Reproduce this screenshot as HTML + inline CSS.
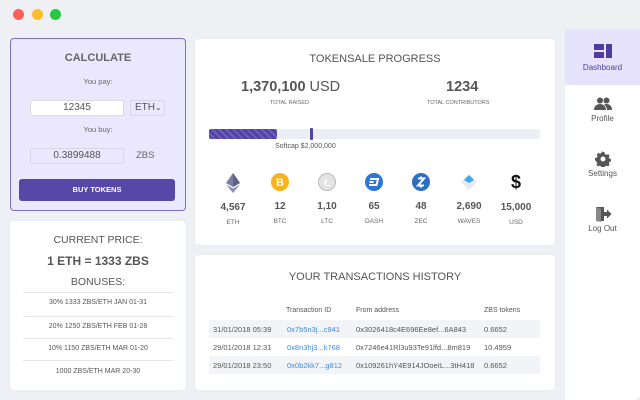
<!DOCTYPE html>
<html><head><style>
*{margin:0;padding:0;box-sizing:border-box}
body{width:640px;height:400px;background:#eef0f5;font-family:"Liberation Sans",sans-serif;position:relative;overflow:hidden;color:#555}
.a{position:absolute}
.card{position:absolute;background:#fff;border-radius:4px;box-shadow:0 0 3px rgba(0,0,0,.05)}
.c{text-align:center}
.dot{position:absolute;top:9px;width:11px;height:11px;border-radius:50%}
.coin{position:absolute;width:40px;text-align:center}
.n{font-size:10px;font-weight:bold;color:#555}
.l{font-size:6.5px;color:#666;margin-top:6px}
.row{position:absolute;left:209px;width:331px;height:18px;font-size:7.5px;color:#555}
.row span{position:absolute;top:5px}
.nav{position:absolute;left:565px;width:75px;text-align:center;font-size:8px;color:#555}
</style></head><body>
<div class="a" style="left:0;top:0;width:640px;height:29px;background:#eff0f3"></div>
<div class="dot" style="left:13px;background:#fe5f57"></div>
<div class="dot" style="left:32px;background:#febc2e"></div>
<div class="dot" style="left:50px;background:#28c840"></div>

<div class="a" style="left:565px;top:29px;width:75px;height:371px;background:#fff;border-bottom-right-radius:6px"></div>
<div class="a" style="left:565px;top:29px;width:75px;height:56px;background:#e7e3fc"></div>
<div class="nav" style="top:43px">
<svg width="20" height="16" viewBox="0 0 20 16"><rect x="1" y="1" width="10" height="6" fill="#4e3d9e"/><rect x="1" y="9" width="10" height="6" fill="#4e3d9e"/><rect x="13" y="1" width="6" height="14" fill="#4e3d9e"/></svg>
<div style="color:#4e3d9e;margin-top:2px">Dashboard</div></div>
<div class="nav" style="top:97px">
<svg width="18" height="14" viewBox="0 0 18 14"><circle cx="6" cy="3.5" r="3" fill="#555"/><circle cx="12.5" cy="3.5" r="3" fill="#555"/><path d="M0 13c0-4 3-6 6-6s6 2 6 6z" fill="#555"/><path d="M10 7.5c1-.5 2-.5 2.5-.5 3 0 5.5 2 5.5 6h-5c0-2-1-4-3-5.5z" fill="#555"/></svg>
<div style="margin-top:1px">Profile</div></div>
<div class="nav" style="top:151px">
<svg width="16" height="16" viewBox="0 0 16 16"><path d="M8 1l1.5 .3.4 1.8 1.5.8 1.7-.8 1.5 1.5-.8 1.7.8 1.5 1.8.4v2.1l-1.8.4-.8 1.5.8 1.7-1.5 1.5-1.7-.8-1.5.8-.4 1.8H6.6l-.4-1.8-1.5-.8-1.7.8-1.5-1.5.8-1.7-.8-1.5L0 9.1V7l1.8-.4.8-1.5-.8-1.7 1.5-1.5 1.7.8 1.5-.8.4-1.8z" fill="#555"/><circle cx="8" cy="8" r="2.5" fill="#fff"/></svg>
<div>Settings</div></div>
<div class="nav" style="top:206px">
<svg width="18" height="16" viewBox="0 0 18 16"><path d="M2 1h8v14H2z" fill="#555"/><path d="M2 1l5 2v13l-5-1z" fill="#888"/><path d="M10 6h3V3.5L17.5 8 13 12.5V10h-3z" fill="#555"/></svg>
<div>Log Out</div></div>

<!-- calculate -->
<div class="a" style="left:10px;top:38px;width:176px;height:173px;background:#ebe7fd;border:1px solid #7e6dcf;border-radius:4px"></div>
<div class="a c" style="left:10px;top:52px;width:176px;font-size:11px;font-weight:bold;color:#666">CALCULATE</div>
<div class="a c" style="left:10px;top:77px;width:176px;font-size:7.5px;color:#666">You pay:</div>
<div class="a c" style="left:30px;top:100px;width:94px;height:16px;background:#fff;border:1px solid #ddd;border-radius:2px;font-size:10px;line-height:14px;color:#555">12345</div>
<div class="a" style="left:130px;top:100px;width:35px;height:16px;border:1px solid #d8d4ea;border-radius:2px;font-size:10px;line-height:14px;padding-left:4px;color:#555">ETH<span style="font-size:8px">⌄</span></div>
<div class="a c" style="left:10px;top:125px;width:176px;font-size:7.5px;color:#666">You buy:</div>
<div class="a c" style="left:30px;top:148px;width:94px;height:16px;border:1px solid #d8d4ea;border-radius:2px;font-size:10px;line-height:14px;color:#555">0.3899488</div>
<div class="a" style="left:136px;top:150px;font-size:9.5px;color:#666">ZBS</div>
<div class="a c" style="left:19px;top:179px;width:156px;height:22px;background:#5748a8;border-radius:3px;color:#fff;font-size:7.5px;font-weight:bold;line-height:22px">BUY TOKENS</div>

<!-- price -->
<div class="card" style="left:10px;top:221px;width:176px;height:169px"></div>
<div class="a c" style="left:10px;top:234px;width:176px;font-size:10.5px;color:#555">CURRENT PRICE:</div>
<div class="a c" style="left:10px;top:254px;width:176px;font-size:12px;font-weight:bold;color:#555">1 ETH = 1333 ZBS</div>
<div class="a c" style="left:10px;top:276px;width:176px;font-size:10.5px;color:#555">BONUSES:</div>
<div class="a" style="left:23px;top:292px;width:150px;border-top:1px solid #e3e6ee"></div>
<div class="a c" style="left:10px;top:299px;width:176px;font-size:7px;color:#555">30% 1333 ZBS/ETH JAN 01-31</div>
<div class="a" style="left:23px;top:316px;width:150px;border-top:1px solid #e3e6ee"></div>
<div class="a c" style="left:10px;top:323px;width:176px;font-size:7px;color:#555">20% 1250 ZBS/ETH FEB 01-28</div>
<div class="a" style="left:23px;top:338px;width:150px;border-top:1px solid #e3e6ee"></div>
<div class="a c" style="left:10px;top:345px;width:176px;font-size:7px;color:#555">10% 1150 ZBS/ETH MAR 01-20</div>
<div class="a" style="left:23px;top:360px;width:150px;border-top:1px solid #e3e6ee"></div>
<div class="a c" style="left:10px;top:368px;width:176px;font-size:7px;color:#555">1000 ZBS/ETH MAR 20-30</div>

<!-- progress -->
<div class="card" style="left:195px;top:39px;width:360px;height:206px"></div>
<div class="a c" style="left:195px;top:53px;width:360px;font-size:11px;color:#555">TOKENSALE PROGRESS</div>
<div class="a" style="left:241px;top:79px;font-size:14.5px;color:#555"><b>1,370,100</b> USD</div>
<div class="a" style="left:270px;top:100px;font-size:5.5px;color:#666">TOTAL RAISED</div>
<div class="a" style="left:446px;top:79px;font-size:14.5px;font-weight:bold;color:#555">1234</div>
<div class="a" style="left:427px;top:100px;font-size:5.5px;color:#666">TOTAL CONTRIBUTORS</div>
<div class="a" style="left:209px;top:129px;width:331px;height:10px;background:#eceef4;border-radius:2px"></div>
<div class="a" style="left:209px;top:129px;width:68px;height:10px;border-radius:2px;background:repeating-linear-gradient(45deg,#5243a3 0 3px,#6b5cc0 3px 5px)"></div>
<div class="a" style="left:310px;top:128px;width:3px;height:12px;background:#5243a3;border-radius:1px"></div>
<div class="a" style="left:275px;top:143px;font-size:7px;color:#555">Softcap $2,000,000</div>

<div class="coin" style="left:213px;top:173px"><svg width="14" height="20" viewBox="0 0 14 20"><path d="M7 0l7 10-7 4-7-4z" fill="#7a7fa3"/><path d="M7 0l7 10-7 4z" fill="#5d6285"/><path d="M0 11.5l7 4 7-4-7 8.5z" fill="#8a8fb3"/></svg><div class="n" style="margin-top:4px">4,567</div><div class="l">ETH</div></div>
<div class="coin" style="left:260px;top:173px"><svg width="18" height="18"><circle cx="9" cy="9" r="9" fill="#f7b21c"/><text x="9" y="13" font-size="11" font-weight="bold" fill="#fff" text-anchor="middle" font-family="Liberation Sans">B</text></svg><div class="n" style="margin-top:5px">12</div><div class="l">BTC</div></div>
<div class="coin" style="left:307px;top:173px"><svg width="18" height="18"><circle cx="9" cy="9" r="8.5" fill="#e4e4e4" stroke="#bbb"/><text x="9" y="13" font-size="11" fill="#fff" text-anchor="middle" font-family="Liberation Sans">Ł</text></svg><div class="n" style="margin-top:5px">1,10</div><div class="l">LTC</div></div>
<div class="coin" style="left:354px;top:173px"><svg width="18" height="18"><circle cx="9" cy="9" r="9" fill="#2b77d3"/><path d="M5 6h8l-1.5 6h-7.5M4.5 9h4" stroke="#fff" stroke-width="2" fill="none"/></svg><div class="n" style="margin-top:5px">65</div><div class="l">DASH</div></div>
<div class="coin" style="left:401px;top:173px"><svg width="18" height="18"><circle cx="9" cy="9" r="9" fill="#2d6fc7"/><path d="M6 5.5h6l-6 7h6M9 3.5v2M9 12.5v2" stroke="#fff" stroke-width="2" fill="none"/></svg><div class="n" style="margin-top:5px">48</div><div class="l">ZEC</div></div>
<div class="coin" style="left:449px;top:173px"><svg width="18" height="18"><path d="M9 1l8 8-8 8-8-8z" fill="#e6eaf3"/><path d="M9 2l5 5-5 3-5-3z" fill="#37a9f0"/></svg><div class="n" style="margin-top:5px">2,690</div><div class="l">WAVES</div></div>
<div class="coin" style="left:496px;top:175px"><div style="font-size:18px;font-weight:bold;color:#111;height:18px;line-height:14px">$</div><div class="n" style="margin-top:9px">15,000</div><div class="l">USD</div></div>

<!-- transactions -->
<div class="card" style="left:195px;top:255px;width:360px;height:135px"></div>
<div class="a c" style="left:195px;top:271px;width:360px;font-size:11px;color:#555">YOUR TRANSACTIONS HISTORY</div>
<div class="a" style="left:286px;top:307px;font-size:7px;color:#555">Transaction ID</div>
<div class="a" style="left:356px;top:307px;font-size:7px;color:#555">From address</div>
<div class="a" style="left:484px;top:307px;font-size:7px;color:#555">ZBS tokens</div>
<div class="row" style="top:320px;background:#f3f4f7"><span style="left:4px">31/01/2018 05:39</span><span style="left:78px;color:#3d8de0">0x7b5n3j...c941</span><span style="left:147px">0x3026418c4E696Ee8ef...6A843</span><span style="left:275px">0.6652</span></div>
<div class="row" style="top:338px"><span style="left:4px">29/01/2018 12:31</span><span style="left:78px;color:#3d8de0">0x8n3hj3...k768</span><span style="left:147px">0x7246e41Rl3u93Te91lfd...8m819</span><span style="left:275px">10.4959</span></div>
<div class="row" style="top:356px;background:#f3f4f7"><span style="left:4px">29/01/2018 23:50</span><span style="left:78px;color:#3d8de0">0x0b2kk7...g812</span><span style="left:147px">0x109261hY4E914JOoeIL...3tH418</span><span style="left:275px">0.6652</span></div>
</body></html>
